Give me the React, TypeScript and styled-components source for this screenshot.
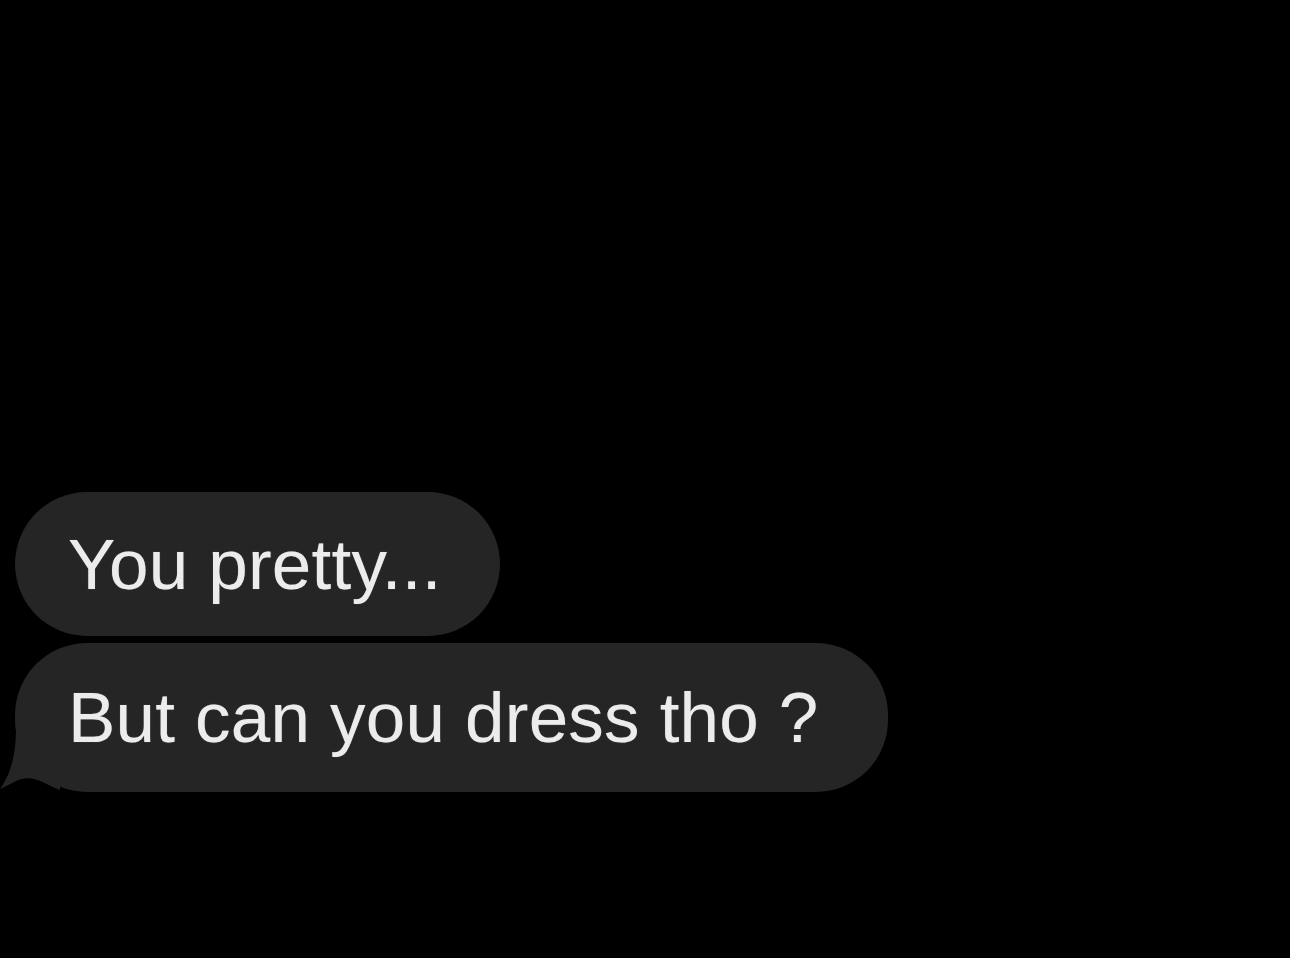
import React from "react";
import styled, { createGlobalStyle } from "styled-components";

const GlobalStyle = createGlobalStyle`
  html, body {
    margin: 0;
    padding: 0;
    background: #000;
  }
`;

const Screen = styled.div`
  width: 1290px;
  height: 958px;
  background: #000;
  display: flex;
  flex-direction: column;
  justify-content: flex-end;
  align-items: flex-start;
  gap: 7px;
  padding: 0 0 166px 15px;
  box-sizing: border-box;
  font-family: "Liberation Sans", Arial, sans-serif;
`;

const Bubble = styled.div<{ $tail?: boolean; $height: number; $padRight: number }>`
  position: relative;
  box-sizing: border-box;
  height: ${(p) => p.$height}px;
  display: flex;
  align-items: center;
  padding: 0 ${(p) => p.$padRight}px 0 53px;
  border-radius: 72px;
  background: #252525;
  color: #ececec;
  font-size: 71px;
  letter-spacing: 0.2px;
  white-space: nowrap;
  text-shadow: 0 0 1px rgba(255, 255, 255, 0.4);

  ${(p) =>
    p.$tail &&
    `
    &::before {
      content: "";
      position: absolute;
      left: -15px;
      bottom: 2px;
      width: 60px;
      height: 62px;
      background: #252525;
      clip-path: path("M16 0 L60 0 L60 62 C 44 56, 32 44, 14 54 C 8 57, 3 60, 0 61 C 9 49, 16 30, 16 0 Z");
    }
  `}
`;

const Label = styled.span`
  position: relative;
`;

export default function App() {
  return (
    <>
      <GlobalStyle />
      <Screen>
        <Bubble $height={144} $padRight={58}>
          <Label>You pretty...</Label>
        </Bubble>
        <Bubble $height={149} $padRight={69} $tail>
          <Label>But can you dress tho ?</Label>
        </Bubble>
      </Screen>
    </>
  );
}
